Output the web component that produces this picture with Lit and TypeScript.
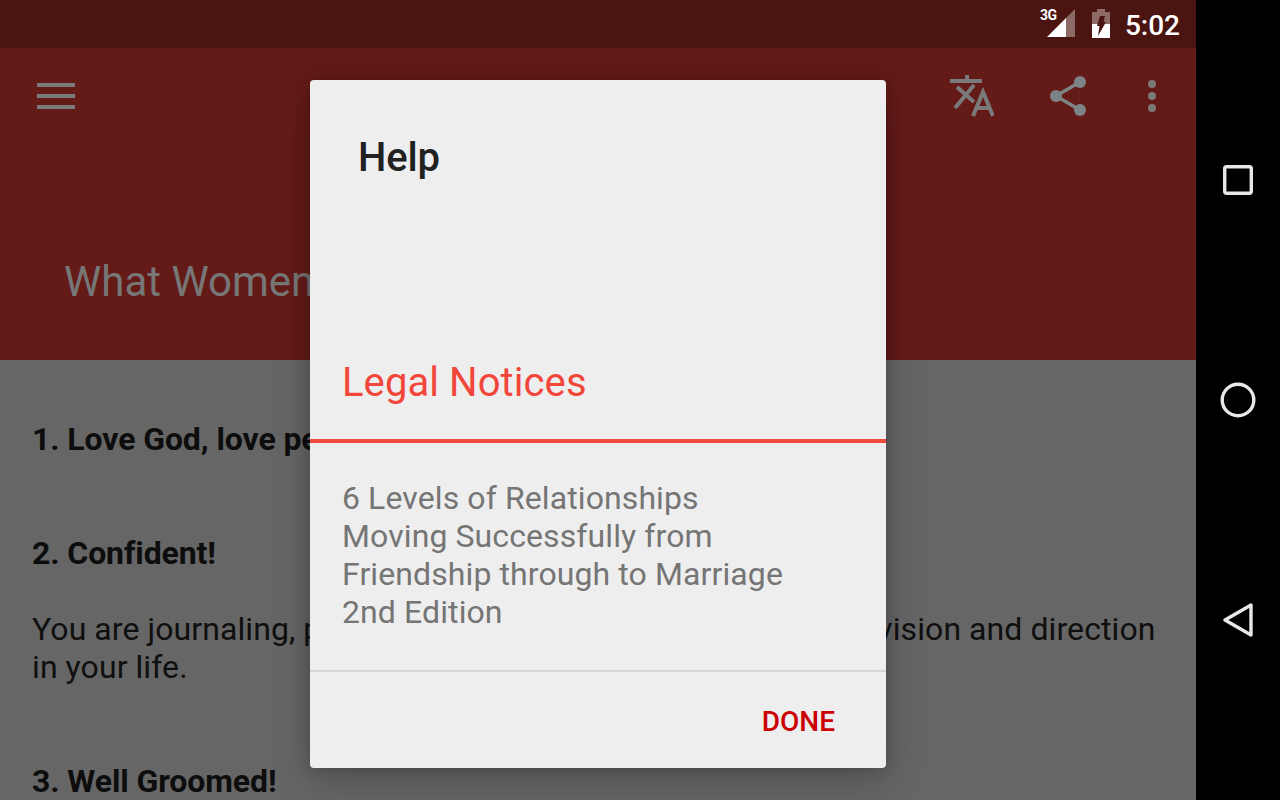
import { LitElement, html, css } from "lit";
import { customElement } from "lit/decorators.js";

@customElement("app-root")
export class AppRoot extends LitElement {
  static styles = css`
    :host {
      display: block;
      width: 1280px;
      height: 800px;
      overflow: hidden;
      font-family: Roboto, "Liberation Sans", sans-serif;
    }
    .device {
      display: flex;
      height: 800px;
      background: #000;
    }
    .screen {
      position: relative;
      width: 1196px;
      height: 800px;
      overflow: hidden;
      display: flex;
      flex-direction: column;
      background: #666;
    }
    .status {
      height: 48px;
      flex: none;
      background: #4a1410;
      display: flex;
      align-items: center;
      justify-content: flex-end;
      padding-right: 16px;
      color: #fff;
    }
    .status .net {
      position: relative;
      width: 35px;
      height: 30px;
      margin-right: 16px;
      margin-top: -4px;
    }
    .status .net span {
      position: absolute;
      left: 0;
      top: 1px;
      font-size: 14px;
      line-height: 14px;
      font-weight: 700;
      letter-spacing: -0.3px;
    }
    .status .net svg {
      position: absolute;
      left: 7px;
      top: 2px;
    }
    .status .batt {
      margin-right: 14px;
    }
    .status .time {
      font-size: 28px;
      font-weight: 500;
      padding-top: 2px;
    }
    .toolbar {
      height: 312px;
      flex: none;
      background: #641b18;
      display: flex;
      flex-direction: column;
      color: #777;
    }
    .actions {
      display: flex;
      height: 96px;
      align-items: center;
      padding: 0 40px 0 37px;
    }
    .actions .grow {
      flex: 1;
    }
    .actions .share {
      margin-left: 56px;
    }
    .actions .more {
      margin-left: 62px;
    }
    .title {
      padding: 114px 0 0 64px;
      font-size: 42px;
      line-height: 48px;
      white-space: nowrap;
    }
    .content {
      padding: 60px 32px 0;
      font-size: 32px;
      line-height: 38px;
      color: #0f0f0f;
      letter-spacing: 0.1px;
    }
    .content p {
      margin: 0;
      white-space: nowrap;
    }
    .content b {
      font-weight: 700;
      color: #0d0d0d;
      letter-spacing: -0.1px;
    }
    .content .gap {
      margin-top: 76px;
    }
    .content .gap-small {
      margin-top: 38px;
      word-spacing: -0.15px;
    }
    .dialog {
      position: absolute;
      left: 310px;
      top: 80px;
      width: 576px;
      height: 688px;
      background: #eeeeee;
      border-radius: 4px;
      box-shadow: 0 12px 40px rgba(0, 0, 0, 0.22), 0 0 16px rgba(0, 0, 0, 0.18);
      display: flex;
      flex-direction: column;
    }
    .dialog h2 {
      margin: 0;
      padding: 54px 48px 0;
      height: 222px;
      box-sizing: border-box;
      font-size: 40px;
      line-height: 48px;
      font-weight: 500;
      letter-spacing: -0.2px;
      color: #212121;
    }
    .tab {
      height: 141px;
      box-sizing: border-box;
      padding: 57px 32px 0;
      border-bottom: 4px solid #f0493e;
      font-size: 40px;
      line-height: 48px;
      letter-spacing: 0.08px;
      color: #f2463a;
    }
    .body {
      padding: 36px 32px 0;
      height: 227px;
      box-sizing: border-box;
      font-size: 32px;
      line-height: 38px;
      letter-spacing: 0.1px;
      color: #757575;
    }
    .foot {
      flex: 1;
      border-top: 2px solid #d6d6d6;
      display: flex;
      align-items: center;
      justify-content: flex-end;
      padding: 2px 51px 0 0;
      font-size: 28px;
      font-weight: 500;
      color: #cc0000;
    }
    .nav {
      width: 84px;
      flex: none;
      display: flex;
      flex-direction: column;
      padding-top: 70px;
      box-sizing: border-box;
    }
    .nav .slot {
      height: 220px;
      display: flex;
      align-items: center;
      justify-content: center;
    }
    .nav svg {
      display: block;
    }
  `;

  render() {
    return html`
      <div class="device">
        <div class="screen">
          <div class="status">
            <div class="net">
              <span>3G</span>
              <svg width="28" height="28" viewBox="0 0 28 28">
                <path d="M0 28 L19 9 V28 Z" fill="#fff" />
                <path d="M19 9 L28 0 V28 H19 Z" fill="#8e6a67" />
              </svg>
            </div>
            <svg class="batt" width="20" height="30" viewBox="0 0 20 30">
              <path d="M6 0 H14 V3 H19 V29 H1 V3 H6 Z" fill="#8e6a67" />
              <rect x="1" y="15" width="18" height="14" fill="#fff" />
              <path d="M9 7 H14 L12.5 13 H15 L7 27 L8.5 17 H6 Z" fill="#4a1410" />
            </svg>
            <span class="time">5:02</span>
          </div>
          <div class="toolbar">
            <div class="actions">
              <svg width="38" height="26" viewBox="0 0 38 26">
                <rect y="0" width="38" height="4" fill="#7a7a7a" />
                <rect y="11" width="38" height="4" fill="#7a7a7a" />
                <rect y="22" width="38" height="4" fill="#7a7a7a" />
              </svg>
              <div class="grow"></div>
              <svg width="44" height="42" viewBox="0 0 44 42" fill="none" stroke="#7a7a7a" stroke-width="4">
                <path d="M0 6 H32 M17 0 V6" />
                <path d="M7 12 L24 27 M24 10 L5 33" />
                <path d="M23 41 L33 17 L43 41 M26.5 33 H39.5" />
              </svg>
              <svg class="share" width="36" height="40" viewBox="0 0 36 40" fill="#7c8487">
                <circle cx="30" cy="6" r="6" />
                <circle cx="6" cy="20" r="6" />
                <circle cx="30" cy="34" r="6" />
                <path d="M30 6 L6 20 L30 34" fill="none" stroke="#7c8487" stroke-width="3.5" />
              </svg>
              <svg class="more" width="8" height="32" viewBox="0 0 8 32" fill="#7a7a7a">
                <circle cx="4" cy="4" r="4" />
                <circle cx="4" cy="16" r="4" />
                <circle cx="4" cy="28" r="4" />
              </svg>
            </div>
            <div class="title">What Women Want in a Man</div>
          </div>
          <div class="content">
            <p><b>1. Love God, love people</b></p>
            <p class="gap"><b>2. Confident!</b></p>
            <p class="gap-small">
              You are journaling, praying and seeking God's plan to find a vision and direction<br />
              in your life.
            </p>
            <p class="gap"><b>3. Well Groomed!</b></p>
          </div>
          <div class="dialog">
            <h2>Help</h2>
            <div class="tab">Legal Notices</div>
            <div class="body">
              6 Levels of Relationships<br />
              Moving Successfully from<br />
              Friendship through to Marriage<br />
              2nd Edition
            </div>
            <div class="foot">DONE</div>
          </div>
        </div>
        <div class="nav">
          <div class="slot">
            <svg width="30" height="30" viewBox="0 0 30 30" fill="none" stroke="#e8e8e8" stroke-width="3.4">
              <rect x="1.7" y="1.7" width="26.6" height="26.6" rx="2" />
            </svg>
          </div>
          <div class="slot">
            <svg width="36" height="36" viewBox="0 0 36 36" fill="none" stroke="#e8e8e8" stroke-width="3.4">
              <circle cx="18" cy="18" r="15.8" />
            </svg>
          </div>
          <div class="slot">
            <svg width="30" height="34" viewBox="0 0 30 34" fill="none" stroke="#e8e8e8" stroke-width="3.4" stroke-linejoin="round">
              <path d="M2 17 L28 2 V32 Z" />
            </svg>
          </div>
        </div>
      </div>
    `;
  }
}
